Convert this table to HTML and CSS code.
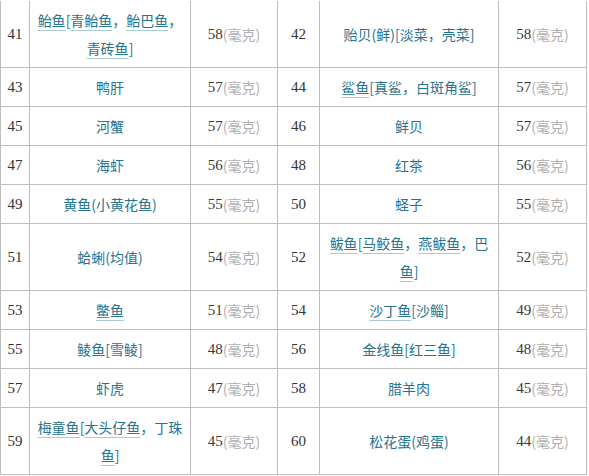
FILE: index.html
```html
<!DOCTYPE html>
<html lang="zh-CN">
<head>
<meta charset="utf-8">
<title>胆固醇含量表</title>
<link rel="stylesheet" href="styles.css">
</head>
<body>
<div class="sheet">
  <div class="table">
    <div class="cell num">41</div>
    <div class="cell name"><span><u>鲐鱼</u>[<u>青鲐鱼</u>，<u>鲐巴鱼</u>，<u>青砖鱼</u>]</span></div>
    <div class="cell val">58<em>(毫克)</em></div>
    <div class="cell num">42</div>
    <div class="cell name"><span>贻贝(鲜)[淡菜，壳菜]</span></div>
    <div class="cell val">58<em>(毫克)</em></div>

    <div class="cell num">43</div>
    <div class="cell name"><span>鸭肝</span></div>
    <div class="cell val">57<em>(毫克)</em></div>
    <div class="cell num">44</div>
    <div class="cell name"><span><u>鲨鱼</u>[真鲨，白斑角鲨]</span></div>
    <div class="cell val">57<em>(毫克)</em></div>

    <div class="cell num">45</div>
    <div class="cell name"><span>河蟹</span></div>
    <div class="cell val">57<em>(毫克)</em></div>
    <div class="cell num">46</div>
    <div class="cell name"><span>鲜贝</span></div>
    <div class="cell val">57<em>(毫克)</em></div>

    <div class="cell num">47</div>
    <div class="cell name"><span>海虾</span></div>
    <div class="cell val">56<em>(毫克)</em></div>
    <div class="cell num">48</div>
    <div class="cell name"><span>红茶</span></div>
    <div class="cell val">56<em>(毫克)</em></div>

    <div class="cell num">49</div>
    <div class="cell name"><span>黄鱼(小黄花鱼)</span></div>
    <div class="cell val">55<em>(毫克)</em></div>
    <div class="cell num">50</div>
    <div class="cell name"><span>蛏子</span></div>
    <div class="cell val">55<em>(毫克)</em></div>

    <div class="cell num">51</div>
    <div class="cell name"><span>蛤蜊(均值)</span></div>
    <div class="cell val">54<em>(毫克)</em></div>
    <div class="cell num">52</div>
    <div class="cell name"><span><u>鲅鱼</u>[<u>马鲛鱼</u>，<u>燕鲅鱼</u>，巴<u>鱼</u>]</span></div>
    <div class="cell val">52<em>(毫克)</em></div>

    <div class="cell num">53</div>
    <div class="cell name"><span><u>鳖鱼</u></span></div>
    <div class="cell val">51<em>(毫克)</em></div>
    <div class="cell num">54</div>
    <div class="cell name"><span><u>沙丁鱼</u>[沙鲻]</span></div>
    <div class="cell val">49<em>(毫克)</em></div>

    <div class="cell num">55</div>
    <div class="cell name"><span>鲮鱼[雪鲮]</span></div>
    <div class="cell val">48<em>(毫克)</em></div>
    <div class="cell num">56</div>
    <div class="cell name"><span>金线鱼[红三鱼]</span></div>
    <div class="cell val">48<em>(毫克)</em></div>

    <div class="cell num">57</div>
    <div class="cell name"><span>虾虎</span></div>
    <div class="cell val">47<em>(毫克)</em></div>
    <div class="cell num">58</div>
    <div class="cell name"><span>腊羊肉</span></div>
    <div class="cell val">45<em>(毫克)</em></div>

    <div class="cell num">59</div>
    <div class="cell name"><span><u>梅童鱼</u>[<u>大头仔鱼</u>，丁珠<u>鱼</u>]</span></div>
    <div class="cell val">45<em>(毫克)</em></div>
    <div class="cell num">60</div>
    <div class="cell name"><span>松花蛋(鸡蛋)</span></div>
    <div class="cell val">44<em>(毫克)</em></div>
  </div>
</div>
</body>
</html>
```

FILE: styles.css
```css
html, body {
  margin: 0;
  padding: 0;
  background: #ffffff;
}

.sheet {
  padding-top: 1px;
}

.table {
  display: grid;
  grid-template-columns: 29px 161px 87px 42px 179px 88px;
  width: max-content;
  border-left: 1px solid #bdbdbd;
  font-family: "Noto Sans CJK SC", "Noto Sans", sans-serif;
  font-size: 14px;
  line-height: 28px;
}

.cell {
  display: flex;
  align-items: center;
  justify-content: center;
  text-align: center;
  padding: 5px;
  border-right: 1px solid #bdbdbd;
  border-bottom: 1px solid #bdbdbd;
  min-width: 0;
}

.num {
  font-family: "Liberation Serif", "DejaVu Serif", serif;
  font-size: 15px;
  color: #333333;
  padding: 5px 2px;
}

.name {
  color: #26748f;
}

.name u {
  text-decoration: underline;
  text-decoration-color: #a8cad6;
  text-underline-offset: 4px;
  text-decoration-thickness: 1px;
}

.val {
  font-family: "Liberation Serif", "DejaVu Serif", serif;
  font-size: 15px;
  color: #3a3a3a;
  white-space: nowrap;
}

.val em {
  font-style: normal;
  font-family: "Noto Sans CJK SC", sans-serif;
  font-size: 14px;
  color: #b0b0b0;
}
```
